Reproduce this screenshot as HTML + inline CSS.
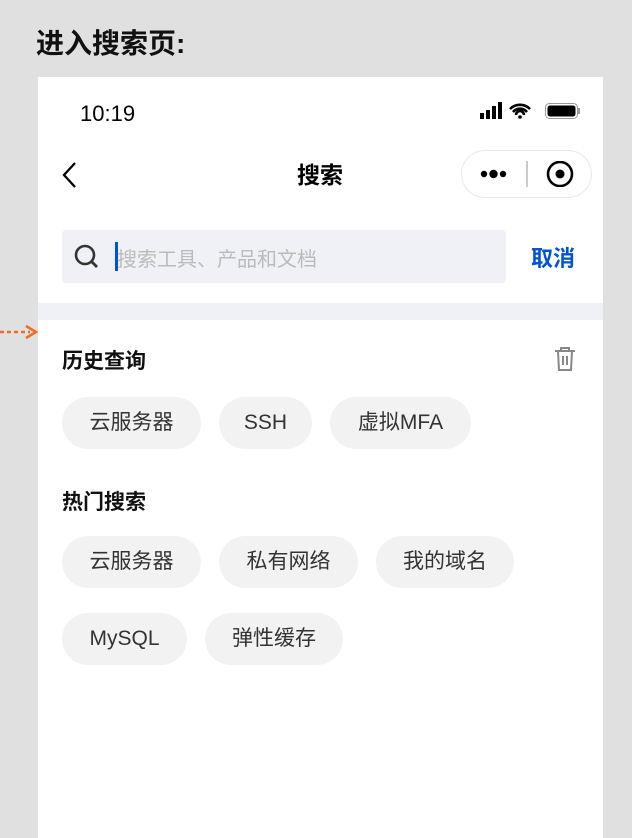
<!DOCTYPE html><html><head><meta charset="utf-8"><style>
*{margin:0;padding:0;box-sizing:border-box}
body{width:632px;height:838px;background:#e0e0e0;font-family:"Liberation Sans","Noto Sans CJK SC",sans-serif;position:relative;overflow:hidden}
.a{position:absolute}
.ph{left:38px;top:77px;width:565px;height:761px;background:#fff}
.tag{position:absolute;height:52px;border-radius:26px;background:#f2f2f2;font-size:21px;color:#333;line-height:52px;text-align:center}
</style></head><body>
<div class="a" style="left:36px;top:22px;font-size:28px;font-weight:bold;color:#111">进入搜索页:</div>
<div class="a ph"></div>
<div class="a" style="left:80px;top:101px;font-size:22px;color:#000">10:19</div>
<svg class="a" style="left:478px;top:101px" width="104" height="22">
<rect x="2" y="12" width="4" height="6" fill="#000"/><rect x="8" y="9" width="4" height="9" fill="#000"/><rect x="14" y="5" width="4" height="13" fill="#000"/><rect x="20" y="1" width="4" height="17" fill="#000"/>
<path d="M32 8a14 14 0 0 1 20 0M35 11a9 9 0 0 1 14 0M38 14a4 4 0 0 1 8 0" stroke="#000" stroke-width="2.6" fill="none"/><circle cx="42" cy="16" r="1.8" fill="#000"/>
<rect x="67.5" y="2.5" width="32" height="15" rx="4" fill="none" stroke="#999"/><rect x="69.5" y="4.5" width="28" height="11" rx="2.5" fill="#000"/><rect x="100" y="7" width="2" height="6" fill="#999"/>
</svg>
<svg class="a" style="left:60px;top:160px" width="20" height="30"><path d="M15 3L4 15L15 27" stroke="#000" stroke-width="2.3" fill="none"/></svg>
<div class="a" style="left:0;width:640px;top:156px;text-align:center;font-size:23px;font-weight:bold;color:#000">搜索</div>
<div class="a" style="left:461px;top:150px;width:131px;height:48px;border:1px solid #e8e8e8;border-radius:24px"></div>
<svg class="a" style="left:478px;top:161px" width="110" height="26"><circle cx="6" cy="13" r="3.2" fill="#000"/><circle cx="15.5" cy="13" r="4.2" fill="#000"/><circle cx="25" cy="13" r="3.2" fill="#000"/><rect x="48" y="0" width="2" height="26" fill="#ccc"/><circle cx="82" cy="13" r="12" stroke="#000" stroke-width="2.6" fill="none"/><circle cx="82" cy="13" r="4.5" fill="#000"/></svg>
<div class="a" style="left:62px;top:230px;width:444px;height:53px;background:#f0f1f6;border-radius:4px"></div>
<svg class="a" style="left:72px;top:242px" width="30" height="30"><circle cx="13" cy="13" r="9" stroke="#333" stroke-width="2.6" fill="none"/><path d="M19.5 19.5L25 25" stroke="#333" stroke-width="2.8"/></svg>
<div class="a" style="left:115px;top:242px;width:3px;height:29px;background:#0052d9"></div>
<div class="a" style="left:117px;top:243px;font-size:20px;color:#bbb">搜索工具、产品和文档</div>
<div class="a" style="left:531px;top:241px;font-size:22px;color:#0052d9;font-weight:bold">取消</div>
<div class="a" style="left:38px;top:303px;width:565px;height:17px;background:#f0f1f6"></div>
<svg class="a" style="left:0;top:322px" width="40" height="20"><path d="M0 10H30" stroke="#f06a28" stroke-width="2.5" stroke-dasharray="4 3"/><path d="M26 4L36 10L26 16" stroke="#f06a28" stroke-width="2.5" fill="none"/></svg>
<div class="a" style="left:62px;top:345px;font-size:21px;font-weight:bold;color:#111">历史查询</div>
<svg class="a" style="left:552px;top:345px" width="26" height="28"><path d="M3 6H23M9 6V3H17V6M6 6L7 25H19L20 6M11 11V20M15 11V20" stroke="#888" stroke-width="2" fill="none"/></svg>
<div class="tag" style="left:62px;top:397px;width:139px">云服务器</div>
<div class="tag" style="left:219px;top:397px;width:93px">SSH</div>
<div class="tag" style="left:330px;top:397px;width:141px">虚拟MFA</div>
<div class="a" style="left:62px;top:486px;font-size:21px;font-weight:bold;color:#111">热门搜索</div>
<div class="tag" style="left:62px;top:536px;width:139px">云服务器</div>
<div class="tag" style="left:219px;top:536px;width:139px">私有网络</div>
<div class="tag" style="left:376px;top:536px;width:138px">我的域名</div>
<div class="tag" style="left:62px;top:613px;width:125px">MySQL</div>
<div class="tag" style="left:205px;top:613px;width:138px">弹性缓存</div>
</body></html>
